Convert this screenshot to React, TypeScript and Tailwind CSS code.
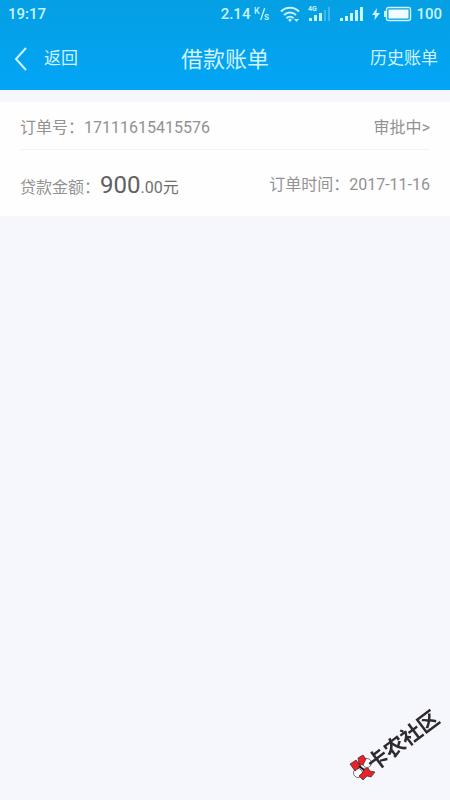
import { useState } from 'react';

const ORDER = {
  id: '17111615415576',
  status: '审批中',
  amount: '900',
  cents: '.00',
  date: '2017-11-16',
};

function WifiIcon() {
  return (
    <svg width="20" height="16" viewBox="0 0 20 16" fill="none" stroke="currentColor" strokeWidth="2">
      <path d="M1 5.500C6 0.500 14 0.500 19 5.500" />
      <path d="M4 9C7.500 5.500 12.500 5.500 16 9" />
      <path d="M6.500 12.200C8.500 10.200 11.500 10.200 13.500 12.200" />
      <circle cx="10" cy="14" r="1.5" fill="currentColor" stroke="none" />
      <path d="M14 13h5l-2.500 3z" fill="currentColor" stroke="none" />
    </svg>
  );
}

function WeakSignalIcon() {
  return (
    <svg width="24" height="16" viewBox="0 0 24 16" fill="currentColor">
      <text x="0" y="5" fontSize="7" fontWeight="700">
        4G
      </text>
      <rect x="1" y="12" width="3" height="3" />
      <rect x="6" y="9" width="3" height="6" />
      <rect x="11" y="7" width="3" height="8" />
      <rect x="16" y="4" width="2" height="11" opacity="0.3" />
      <rect x="20" y="1" width="2" height="14" opacity="0.3" />
    </svg>
  );
}

function SignalIcon() {
  return (
    <svg width="24" height="16" viewBox="0 0 24 16" fill="currentColor">
      <rect x="0" y="12" width="3" height="3" />
      <rect x="5" y="10" width="3" height="5" />
      <rect x="10" y="7" width="3" height="8" />
      <rect x="15" y="4" width="3" height="11" />
      <rect x="20" y="1" width="3" height="14" />
    </svg>
  );
}

function BatteryIcon() {
  return (
    <svg width="28" height="16" viewBox="0 0 28 16">
      <rect x="2.5" y="1.5" width="24" height="13" rx="2" fill="none" stroke="currentColor" strokeWidth="1.4" />
      <rect x="4.5" y="3.5" width="20" height="9" fill="#f2fcff" />
      <rect x="0" y="5" width="2" height="6" fill="currentColor" />
    </svg>
  );
}

function StatusBar() {
  return (
    <div className="flex h-7 items-center px-2 text-[15px] font-medium text-[#c9f3ff]">
      <span>19:17</span>
      <div className="ml-auto flex items-center">
        <span>2.14</span>
        <svg width="18" height="16" viewBox="0 0 18 16" fill="currentColor" className="ml-1">
          <text x="0" y="8" fontSize="9">
            K
          </text>
          <path d="M10 2h1.400L7.400 14H6z" />
          <text x="10" y="14" fontSize="10">
            s
          </text>
        </svg>
        <span className="ml-2">
          <WifiIcon />
        </span>
        <span className="ml-2">
          <WeakSignalIcon />
        </span>
        <span className="ml-2">
          <SignalIcon />
        </span>
        <svg width="8" height="12" viewBox="0 0 8 12" fill="currentColor" className="ml-2">
          <path d="M5 0L0 7h3L2.500 12L8 5H4.500z" />
        </svg>
        <span className="ml-1">
          <BatteryIcon />
        </span>
        <span className="ml-1">100</span>
      </div>
    </div>
  );
}

function Watermark() {
  return (
    <div className="pointer-events-none fixed right-0 bottom-0">
      <svg width="115" height="105" viewBox="0 0 115 105">
        <g stroke="#1d1718" strokeWidth="0.6">
          <circle cx="32" cy="68" r="4.500" fill="#fff" />
          <circle cx="23" cy="78" r="4.500" fill="#fff" />
          <path d="M15 69l6-4 5 6-6 5z" fill="#e8212b" />
          <path d="M23 63l5-3 3 4-3 6-4-1z" fill="#e8212b" />
          <path d="M29 74l4-1 2 3 5 1-4 5-4-1-4 4-4-4 4-4z" fill="#e8212b" />
          <path d="M24 71l5 4" strokeWidth="2" />
        </g>
        <text
          x="39"
          y="77"
          transform="rotate(-37 39 77)"
          fontSize="21"
          fontWeight="700"
          fill="#2d2b2e"
        >
          卡农社区
        </text>
      </svg>
    </div>
  );
}

export default function App() {
  const [open, setOpen] = useState(false);

  return (
    <div className="min-h-screen bg-[#f6f7fc] font-[Roboto,'Noto_Sans_CJK_SC',sans-serif]">
      <header className="bg-linear-to-b from-[#059fe3] to-[#02a5f6]">
        <StatusBar />
        <div className="grid h-[62px] grid-cols-3 items-center px-3 text-[#d0f3ff]">
          <button type="button" className="flex items-center gap-4 text-[17px]">
            <svg width="16" height="24" viewBox="0 0 16 24" fill="none" stroke="currentColor" strokeWidth="2">
              <path d="M14 1L4 12l10 11" />
            </svg>
            返回
          </button>
          <h1 className="text-center text-[22px]">借款账单</h1>
          <a href="#history" className="text-right text-[17px]">
            历史账单
          </a>
        </div>
      </header>

      <main className="mt-3 bg-[#fefefe] px-5 text-base text-[#929292]">
        <div className="flex h-12 items-center justify-between border-b border-[#f3f1f3] pt-1">
          <p>订单号：{ORDER.id}</p>
          <button type="button" aria-expanded={open} onClick={() => setOpen(!open)}>
            {ORDER.status}&gt;
          </button>
        </div>
        <div className="flex h-[66px] items-center justify-between pt-1">
          <p>
            贷款金额：
            <span className="text-2xl text-[#606060]">{ORDER.amount}</span>
            <span className="text-[#707070]">{ORDER.cents}元</span>
          </p>
          <p>订单时间：{ORDER.date}</p>
        </div>
      </main>

      <Watermark />
    </div>
  );
}
